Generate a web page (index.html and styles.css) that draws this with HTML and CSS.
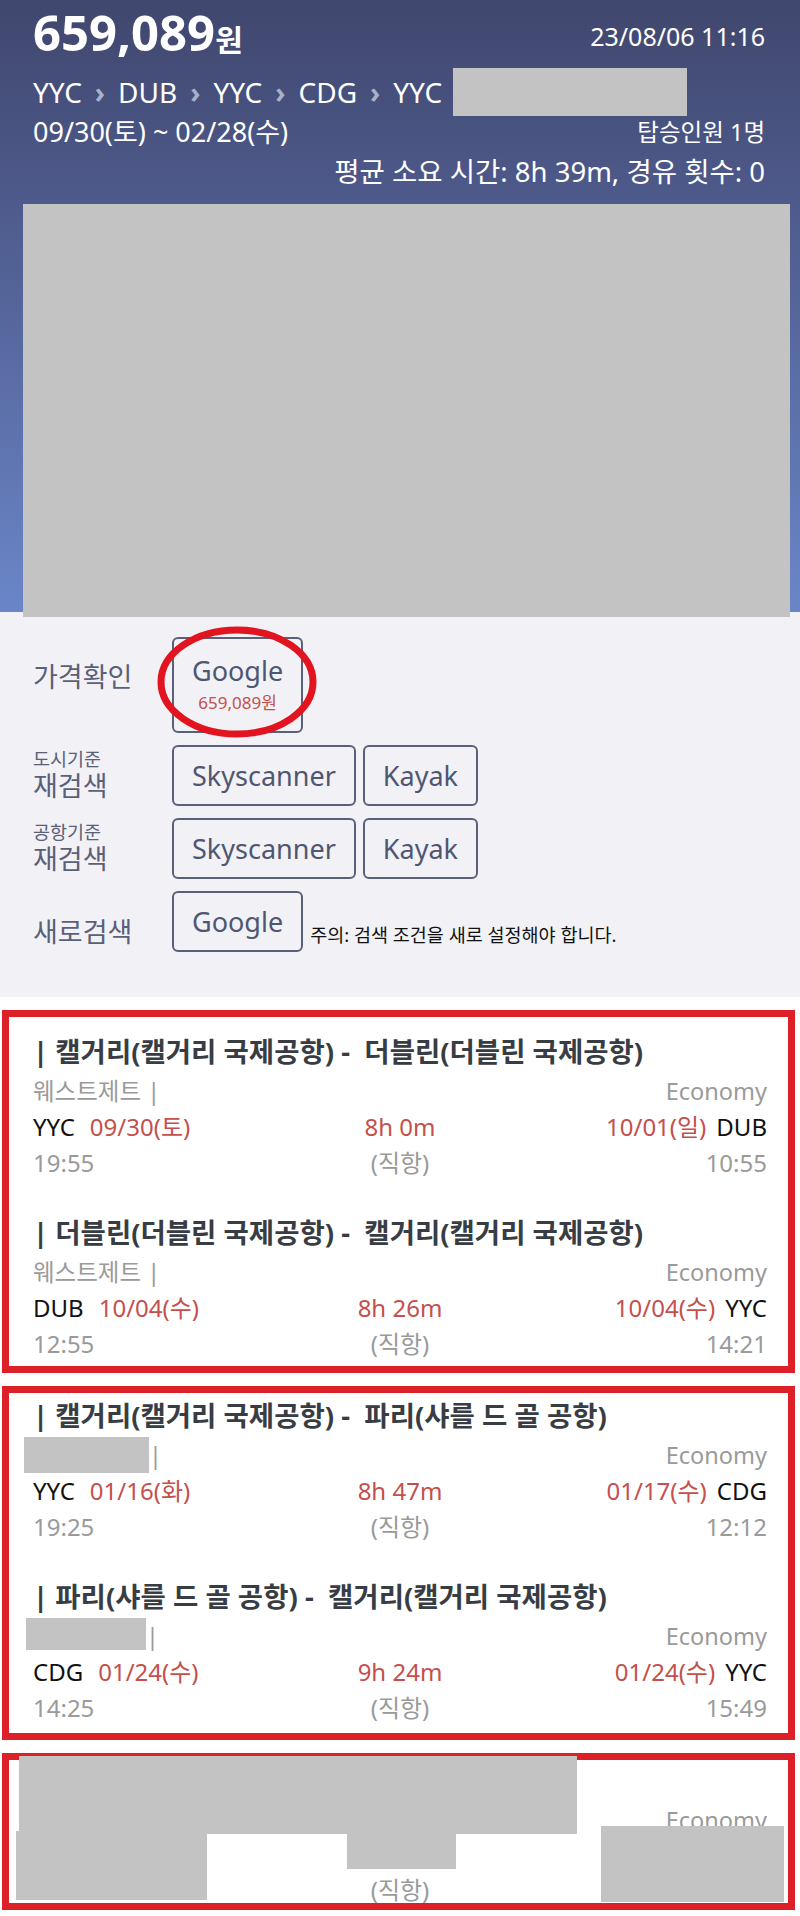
FILE: index.html
```html
<!DOCTYPE html>
<html lang="ko">
<head>
    <meta charset="UTF-8">
    <title>항공권 상세</title>
    <link rel="stylesheet" href="styles.css">
</head>
<body>
    <div class="top">
        <div class="top-row head">
            <div class="price">659,089<span class="won">원</span></div>
            <div class="stamp">23/08/06 11:16</div>
        </div>
        <div class="route">
            <span>YYC<i class="arr">›</i>DUB<i class="arr">›</i>YYC<i class="arr">›</i>CDG<i class="arr">›</i>YYC</span>
            <span class="route-mask"></span>
        </div>
        <div class="top-row dates">
            <span>09/30(토) ~ 02/28(수)</span>
            <span class="pax">탑승인원 1명</span>
        </div>
        <div class="avg">평균 소요 시간: 8h 39m, 경유 횟수: 0</div>
        <div class="map"></div>
    </div>

    <div class="links">
        <div class="link-row check">
            <div class="label">가격확인</div>
            <a class="btn btn-price">Google<span class="btn-sub">659,089원</span>
                <svg class="circle" viewBox="0 0 160 114"><ellipse cx="80" cy="57" rx="76" ry="52"/></svg>
            </a>
        </div>
        <div class="link-row">
            <div class="label"><small>도시기준</small>재검색</div>
            <a class="btn">Skyscanner</a>
            <a class="btn">Kayak</a>
        </div>
        <div class="link-row">
            <div class="label"><small>공항기준</small>재검색</div>
            <a class="btn">Skyscanner</a>
            <a class="btn">Kayak</a>
        </div>
        <div class="link-row fresh">
            <div class="label">새로검색</div>
            <a class="btn">Google</a>
            <span class="note">주의: 검색 조건을 새로 설정해야 합니다.</span>
        </div>
    </div>

    <div class="trips">
        <div class="card card-first">
            <div class="leg">
                <div class="leg-title">| 캘거리(캘거리 국제공항) -&nbsp; 더블린(더블린 국제공항)</div>
                <div class="leg-row leg-meta"><span>웨스트제트 |</span><span>Economy</span></div>
                <div class="leg-row"><span><span class="code">YYC</span><span class="red dep">09/30(토)</span></span><span class="red">8h 0m</span><span><span class="red">10/01(일)</span><span class="code arr-code">DUB</span></span></div>
                <div class="leg-row leg-times"><span>19:55</span><span>(직항)</span><span>10:55</span></div>
            </div>
            <div class="leg">
                <div class="leg-title">| 더블린(더블린 국제공항) -&nbsp; 캘거리(캘거리 국제공항)</div>
                <div class="leg-row leg-meta"><span>웨스트제트 |</span><span>Economy</span></div>
                <div class="leg-row"><span><span class="code">DUB</span><span class="red dep">10/04(수)</span></span><span class="red">8h 26m</span><span><span class="red">10/04(수)</span><span class="code arr-code">YYC</span></span></div>
                <div class="leg-row leg-times"><span>12:55</span><span>(직항)</span><span>14:21</span></div>
            </div>
        </div>

        <div class="card">
            <div class="leg">
                <div class="leg-title">| 캘거리(캘거리 국제공항) -&nbsp; 파리(샤를 드 골 공항)</div>
                <div class="leg-row leg-meta"><span><span class="air-mask"></span>|</span><span>Economy</span></div>
                <div class="leg-row"><span><span class="code">YYC</span><span class="red dep">01/16(화)</span></span><span class="red">8h 47m</span><span><span class="red">01/17(수)</span><span class="code arr-code">CDG</span></span></div>
                <div class="leg-row leg-times"><span>19:25</span><span>(직항)</span><span>12:12</span></div>
            </div>
            <div class="leg">
                <div class="leg-title">| 파리(샤를 드 골 공항) -&nbsp; 캘거리(캘거리 국제공항)</div>
                <div class="leg-row leg-meta"><span><span class="air-mask air-mask-2"></span>|</span><span>Economy</span></div>
                <div class="leg-row"><span><span class="code">CDG</span><span class="red dep">01/24(수)</span></span><span class="red">9h 24m</span><span><span class="red">01/24(수)</span><span class="code arr-code">YYC</span></span></div>
                <div class="leg-row leg-times"><span>14:25</span><span>(직항)</span><span>15:49</span></div>
            </div>
        </div>

        <div class="card card-last">
            <div class="leg">
                <div class="leg-title">&nbsp;</div>
                <div class="leg-row leg-meta"><span>&nbsp;</span><span>Economy</span></div>
                <div class="leg-row"><span>&nbsp;</span><span>&nbsp;</span><span>&nbsp;</span></div>
                <div class="leg-row leg-times"><span>&nbsp;</span><span>(직항)</span><span>&nbsp;</span></div>
            </div>
            <div class="hide hide-a"></div>
            <div class="hide hide-b"></div>
            <div class="hide hide-c"></div>
            <div class="hide hide-d"></div>
        </div>
    </div>
</body>
</html>
```

FILE: styles.css
```css
*{
    box-sizing: border-box;
}
body{
    margin: 0;
    background: #fff;
    font-family: "Noto Sans", "Noto Sans CJK KR", sans-serif;
}

/* 상단 요약 */
.top{
    padding: 8px 35px 0 33px;
    color: #fff;
    background: linear-gradient(to bottom, #40476e 0, #4e5a8b 200px, #6a86c8 612px, #f1f1f6 612px);
}
.top-row{
    display: flex;
    justify-content: space-between;
    align-items: center;
}
.head{
    height: 56px;
}
.price{
    font-size: 49px;
    font-weight: 700;
    line-height: 56px;
}
.won{
    font-size: 30px;
}
.stamp{
    font-size: 25px;
}
.route{
    display: flex;
    align-items: center;
    margin-top: 10px;
    font-size: 28px;
    line-height: 36px;
}
.arr{
    font-style: normal;
    font-weight: 700;
    color: #aab0c9;
    margin: 0 13px;
}
.route-mask{
    width: 234px;
    height: 48px;
    margin: -6px 0 -6px 11px;
    background: #c3c3c3;
}
.dates{
    margin-top: 4px;
    font-size: 27px;
    line-height: 36px;
}
.pax{
    font-size: 23.5px;
}
.avg{
    margin-top: 4px;
    font-size: 27.5px;
    line-height: 36px;
    text-align: right;
}
.map{
    margin: 14px -25px 0 -10px;
    height: 413px;
    background: #c3c3c3;
}

/* 링크 버튼 */
.links{
    padding: 20px 0 45px 33px;
    background: #f1f1f6;
}
.link-row{
    display: flex;
    align-items: center;
    margin-top: 12px;
}
.link-row:first-child{
    margin-top: 0;
}
.label{
    width: 139px;
    color: #5a6078;
    font-family: "Liberation Sans", "Noto Sans CJK KR", sans-serif;
    font-size: 27px;
    line-height: 32px;
}
.label small{
    display: block;
    font-size: 18.5px;
    line-height: 22px;
}
.check .label{
    margin-bottom: 14px;
}
.btn{
    position: relative;
    display: inline-flex;
    flex-direction: column;
    align-items: center;
    justify-content: center;
    height: 61px;
    padding: 0 18px;
    margin-right: 7px;
    border: 2px solid #5a6079;
    border-radius: 6px;
    color: #4f5672;
    font-size: 27px;
    line-height: 36px;
    text-decoration: none;
}
.btn-price{
    height: 96px;
}
.btn-sub{
    font-size: 17px;
    line-height: 28px;
    color: #c4504c;
}
.circle{
    position: absolute;
    left: -17px;
    top: -14px;
    width: 160px;
    height: 114px;
    overflow: visible;
}
.circle ellipse{
    fill: none;
    stroke: #e1141f;
    stroke-width: 7;
}
.fresh{
    align-items: flex-end;
}
.fresh .label{
    margin-bottom: 4px;
    line-height: 30px;
}
.note{
    margin-bottom: 5px;
    font-size: 18.5px;
    line-height: 24px;
    color: #111;
}

/* 여정 카드 */
.trips{
    padding-top: 13px;
}
.card{
    position: relative;
    margin: 0 5px 13px 2px;
    padding: 2px 21px 10px 24px;
    border: 7px solid #dd2027;
    background: #fff;
}
.card-first{
    padding-top: 14px;
    padding-bottom: 7px;
}
.card-last{
    padding-top: 0;
    padding-bottom: 0;
    margin-bottom: 0;
}
.card-last .leg-times{
    line-height: 26px;
}
.leg + .leg{
    margin-top: 34px;
}
.leg-title{
    font-size: 27.5px;
    font-weight: 700;
    line-height: 42px;
    color: #383d44;
    white-space: nowrap;
}
.leg-row{
    display: grid;
    grid-template-columns: 1fr auto 1fr;
    font-size: 24px;
    line-height: 36px;
    white-space: nowrap;
}
.leg-row > :last-child{
    text-align: right;
}
.leg-meta{
    grid-template-columns: 1fr 1fr;
    font-size: 23.5px;
    color: #9a9a9a;
}
.leg-times{
    padding-top: 3px;
    line-height: 30px;
    color: #9a9a9a;
}
.code{
    color: #111;
}
.red{
    color: #c4504c;
}
.dep{
    margin-left: 15px;
}
.arr-code{
    margin-left: 10px;
}
.air-mask{
    display: inline-block;
    vertical-align: top;
    width: 125px;
    height: 36px;
    margin-left: -9px;
    background: #c3c3c3;
}
.air-mask-2{
    width: 120px;
    height: 32px;
    margin-left: -7px;
}

/* 가림 처리 */
.hide{
    position: absolute;
    background: #c3c3c3;
}
.hide-a{
    left: 10px;
    top: -4px;
    width: 558px;
    height: 78px;
}
.hide-b{
    left: 7px;
    top: 71px;
    width: 191px;
    height: 69px;
}
.hide-c{
    left: 338px;
    top: 74px;
    width: 109px;
    height: 35px;
}
.hide-d{
    left: 592px;
    top: 66px;
    width: 183px;
    height: 76px;
}
```
